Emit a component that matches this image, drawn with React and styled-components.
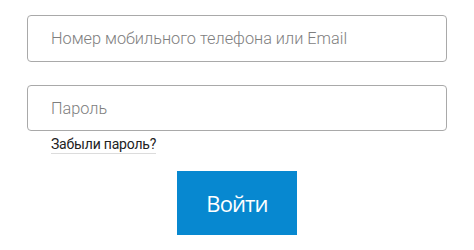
import React from 'react'
import styled, { createGlobalStyle } from 'styled-components'

const GlobalStyle = createGlobalStyle`
  body {
    margin: 0;
    padding: 0;
    background: #ffffff;
  }
`

const Form = styled.form`
  width: 474px;
  height: 250px;
  box-sizing: border-box;
  padding: 15px 27px 0 27px;
  display: flex;
  flex-direction: column;
`

const Campo = styled.input`
  box-sizing: border-box;
  width: 420px;
  height: ${props => props.$h || 47}px;
  margin: 0;
  margin-bottom: ${props => props.$mb || 0}px;
  padding: 0 0 0 23px;
  border: 1px solid #a9a9a9;
  border-radius: 4px;
  font-family: Roboto, "Liberation Sans", sans-serif;
  font-size: 16.3px;
  font-weight: 300;
  color: #333;
  outline: none;

  &::placeholder {
    color: #7e7e7e;
  }
`

const Esqueci = styled.a`
  align-self: flex-start;
  margin: 4px 0 0 24px;
  font-family: Roboto, "Liberation Sans", sans-serif;
  font-size: 14px;
  letter-spacing: -0.2px;
  line-height: 18px;
  color: #222;
  text-decoration: none;
  border-bottom: 1px solid #dcdcdc;
`

const Botao = styled.button`
  align-self: center;
  margin-top: 17px;
  width: 120px;
  height: 64px;
  border: none;
  border-radius: 0;
  background-color: #0788d0;
  color: #ffffff;
  font-family: "Open Sans", "Liberation Sans", sans-serif;
  font-size: 22px;
  font-weight: 500;
  letter-spacing: -0.9px;
  padding: 0;
`

export default function App() {
  return (
    <Form onSubmit={e => e.preventDefault()}>
      <GlobalStyle />
      <Campo type="text" placeholder="Номер мобильного телефона или Email" $mb={23} />
      <Campo type="password" placeholder="Пароль" $h={46} />
      <Esqueci href="#">Забыли пароль?</Esqueci>
      <Botao type="submit">Войти</Botao>
    </Form>
  )
}
